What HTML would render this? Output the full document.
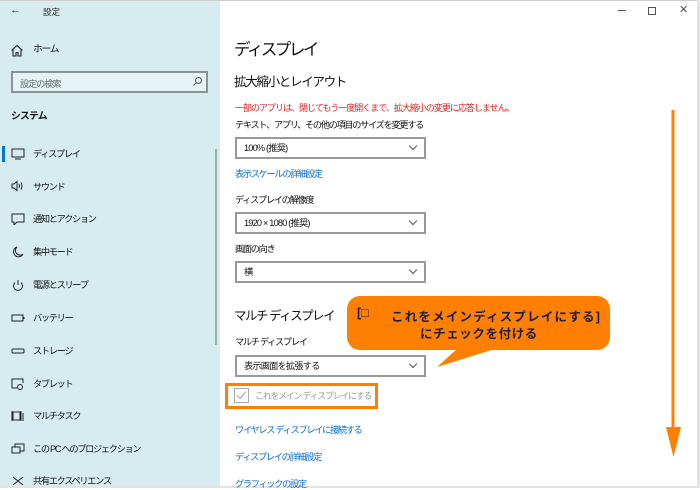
<!DOCTYPE html>
<html><head><meta charset="utf-8"><style>
*{margin:0;padding:0;box-sizing:border-box}
body{width:700px;height:488px;overflow:hidden;background:#fff;font-family:"Liberation Sans","Noto Sans CJK JP",sans-serif;color:#000;position:relative}
.a{position:absolute;white-space:nowrap}
#side{position:absolute;left:0;top:0;width:220px;height:488px;background:#d7ecf1}
.it{position:absolute;left:33px;font-size:9.2px;letter-spacing:-1.3px;color:#111;line-height:12px}
.ic{position:absolute;left:11px;width:14px;height:12px}
.dd{position:absolute;left:235px;width:191px;height:22px;border:2px solid #999;background:#fff;font-size:9.2px;letter-spacing:-0.8px;line-height:18px;padding-left:7px;color:#111}
.dd:after{content:"";position:absolute;right:8px;top:4px;width:5px;height:5px;border-right:1px solid #555;border-bottom:1px solid #555;transform:rotate(45deg)}
.lk{position:absolute;left:235px;font-size:9.2px;letter-spacing:-1.3px;color:#0a6ccc;line-height:12px}
.lb{position:absolute;left:235px;font-size:9.2px;letter-spacing:-1.3px;color:#111;line-height:12px}
</style></head><body>
<div id="side">
<div class="a" style="left:10px;top:4px;font-size:11px;color:#333">&#8592;</div>
<div class="a" style="left:43px;top:6px;font-size:8.5px;color:#222">設定</div>
<svg class="a" style="left:10px;top:44px" width="14" height="13"><path d="M1.5 6.5L7 1.5L12.5 6.5M3 5V12H6V8.5H8V12H11V5" fill="none" stroke="#222" stroke-width="1.1"/></svg>
<div class="it" style="top:44px;font-size:9.8px">ホーム</div>
<div class="a" style="left:11px;top:71px;width:197px;height:22px;border:2px solid #8c9396;background:#e5f3f6"></div>
<div class="a" style="left:20px;top:76px;font-size:9.2px;letter-spacing:-1.1px;color:#666">設定の検索</div>
<svg class="a" style="left:192px;top:76px" width="11" height="11"><circle cx="6.5" cy="4.5" r="3" fill="none" stroke="#555"/><path d="M4.5 6.5L1.5 9.5" stroke="#555"/></svg>
<div class="a" style="left:11px;top:108px;font-size:9.8px;letter-spacing:-0.8px;font-weight:bold;color:#111">システム</div>
<div class="a" style="left:2px;top:146px;width:3px;height:16px;background:#0078d7"></div>
<div class="a" style="left:215px;top:149px;width:2px;height:196px;background:#a2aaad"></div>
<svg class="ic" style="top:148px"><rect x="1" y="1" width="12" height="8" fill="none" stroke="#222"/><path d="M4 11H10" stroke="#222"/></svg>
<div class="it" style="top:148px">ディスプレイ</div>
<svg class="ic" style="top:180px"><path d="M1 4H3L6 1.5V10.5L3 8H1Z" fill="none" stroke="#222"/><path d="M8 4Q9 6 8 8M10 2.5Q12 6 10 9.5" fill="none" stroke="#222"/></svg>
<div class="it" style="top:181px">サウンド</div>
<svg class="ic" style="top:213px"><path d="M1 1H13V9H6L3 12V9H1Z" fill="none" stroke="#222"/></svg>
<div class="it" style="top:213px">通知とアクション</div>
<svg class="ic" style="top:246px"><path d="M6 1A5 5 0 1 0 12 8A4.5 4.5 0 0 1 6 1Z" fill="none" stroke="#222"/></svg>
<div class="it" style="top:246px">集中モード</div>
<svg class="ic" style="top:279px"><path d="M4 3.5A4.5 4.5 0 1 0 10 3.5M7 1V6" fill="none" stroke="#222"/></svg>
<div class="it" style="top:279px">電源とスリープ</div>
<svg class="ic" style="top:312px"><rect x="1" y="3" width="11" height="6" fill="none" stroke="#222"/><path d="M13 5V7" stroke="#222"/></svg>
<div class="it" style="top:312px">バッテリー</div>
<svg class="ic" style="top:345px"><rect x="1" y="4" width="12" height="4" rx="1" fill="none" stroke="#222"/></svg>
<div class="it" style="top:345px">ストレージ</div>
<svg class="ic" style="top:378px"><path d="M6 10H1V1H12V5" fill="none" stroke="#222"/><circle cx="9" cy="9" r="2.5" fill="none" stroke="#222"/></svg>
<div class="it" style="top:378px">タブレット</div>
<svg class="ic" style="top:410px"><rect x="2" y="2" width="7" height="8" fill="none" stroke="#222"/><path d="M1 1V11M10 1V11M12 3V11" stroke="#222"/></svg>
<div class="it" style="top:410px">マルチタスク</div>
<svg class="ic" style="top:443px"><rect x="4" y="1" width="9" height="7" fill="none" stroke="#222"/><rect x="1" y="4" width="8" height="6" fill="#d7ecf1" stroke="#222"/></svg>
<div class="it" style="top:443px">この PC へのプロジェクション</div>
<svg class="ic" style="top:475px"><path d="M2 2L12 10M12 2L2 10" stroke="#222"/></svg>
<div class="it" style="top:475px">共有エクスペリエンス</div>
</div>
<div class="a" style="left:0;top:0;width:700px;height:1px;background:#ccc"></div>
<div class="a" style="left:697px;top:0;width:3px;height:488px;background:#e3e3e3"></div>
<div class="a" style="left:0;top:486px;width:700px;height:2px;background:#e3e3e3"></div>
<div class="a" style="left:618px;top:10px;width:8px;height:1px;background:#555"></div>
<div class="a" style="left:648px;top:7px;width:8px;height:8px;border:1px solid #555"></div>
<div class="a" style="left:679px;top:3px;font-size:11px;color:#555">&#10005;</div>

<div class="a" style="left:234px;top:36px;font-size:16.5px;letter-spacing:-2.5px;color:#111">ディスプレイ</div>
<div class="a" style="left:234px;top:71px;font-size:12.5px;letter-spacing:-1.3px;color:#111">拡大縮小とレイアウト</div>
<div class="a" style="left:235px;top:101px;font-size:9px;letter-spacing:-1px;color:#e0201e">一部のアプリは、閉じてもう一度開くまで、拡大縮小の変更に応答しません。</div>
<div class="lb" style="top:119px">テキスト、アプリ、その他の項目のサイズを変更する</div>
<div class="dd" style="top:137px">100% (推奨)</div>
<div class="lk" style="top:168px">表示スケールの詳細設定</div>
<div class="lb" style="top:194px">ディスプレイの解像度</div>
<div class="dd" style="top:212px">1920 × 1080 (推奨)</div>
<div class="lb" style="top:243px">画面の向き</div>
<div class="dd" style="top:261px">横</div>
<div class="a" style="left:234px;top:305px;font-size:12.5px;letter-spacing:-1.5px;color:#111">マルチ ディスプレイ</div>
<div class="lb" style="top:336px">マルチ ディスプレイ</div>
<div class="dd" style="top:355px">表示画面を拡張する</div>
<div class="a" style="left:225px;top:383px;width:153px;height:26px;border:3px solid #ff8000"></div>
<svg class="a" style="left:234px;top:388px" width="15" height="15"><rect x="0.5" y="0.5" width="14" height="14" fill="none" stroke="#aaa"/><path d="M3 7.5L6 10.5L12 3.5" fill="none" stroke="#aaa" stroke-width="1.2"/></svg>
<div class="a" style="left:255px;top:389px;font-size:9px;letter-spacing:-1.3px;color:#999">これをメイン ディスプレイにする</div>
<div class="lk" style="top:424px">ワイヤレス ディスプレイに接続する</div>
<div class="lk" style="top:451px">ディスプレイの詳細設定</div>
<div class="lk" style="top:478px">グラフィックの設定</div>

<svg class="a" style="left:0;top:0" width="700" height="488">
<rect x="347" y="296" width="263" height="54" rx="13" fill="#ff8000"/>
<path d="M458 348L498 348L437 367Z" fill="#ff8000"/>
<path d="M673 110V430" stroke="#ff8000" stroke-width="3"/>
<path d="M666 427H681L673.5 457Z" fill="#ff8000"/>
</svg>
<div class="a" style="left:357px;top:306px;font-size:12.5px;font-weight:bold;color:#1e1e3c">[□</div>
<div class="a" style="left:391px;top:306px;font-size:12.5px;letter-spacing:1.2px;font-weight:bold;color:#1e1e3c">これをメインディスプレイにする]</div>
<div class="a" style="left:420px;top:323px;font-size:12.5px;letter-spacing:0.6px;font-weight:bold;color:#1e1e3c">にチェックを付ける</div>
</body></html>
